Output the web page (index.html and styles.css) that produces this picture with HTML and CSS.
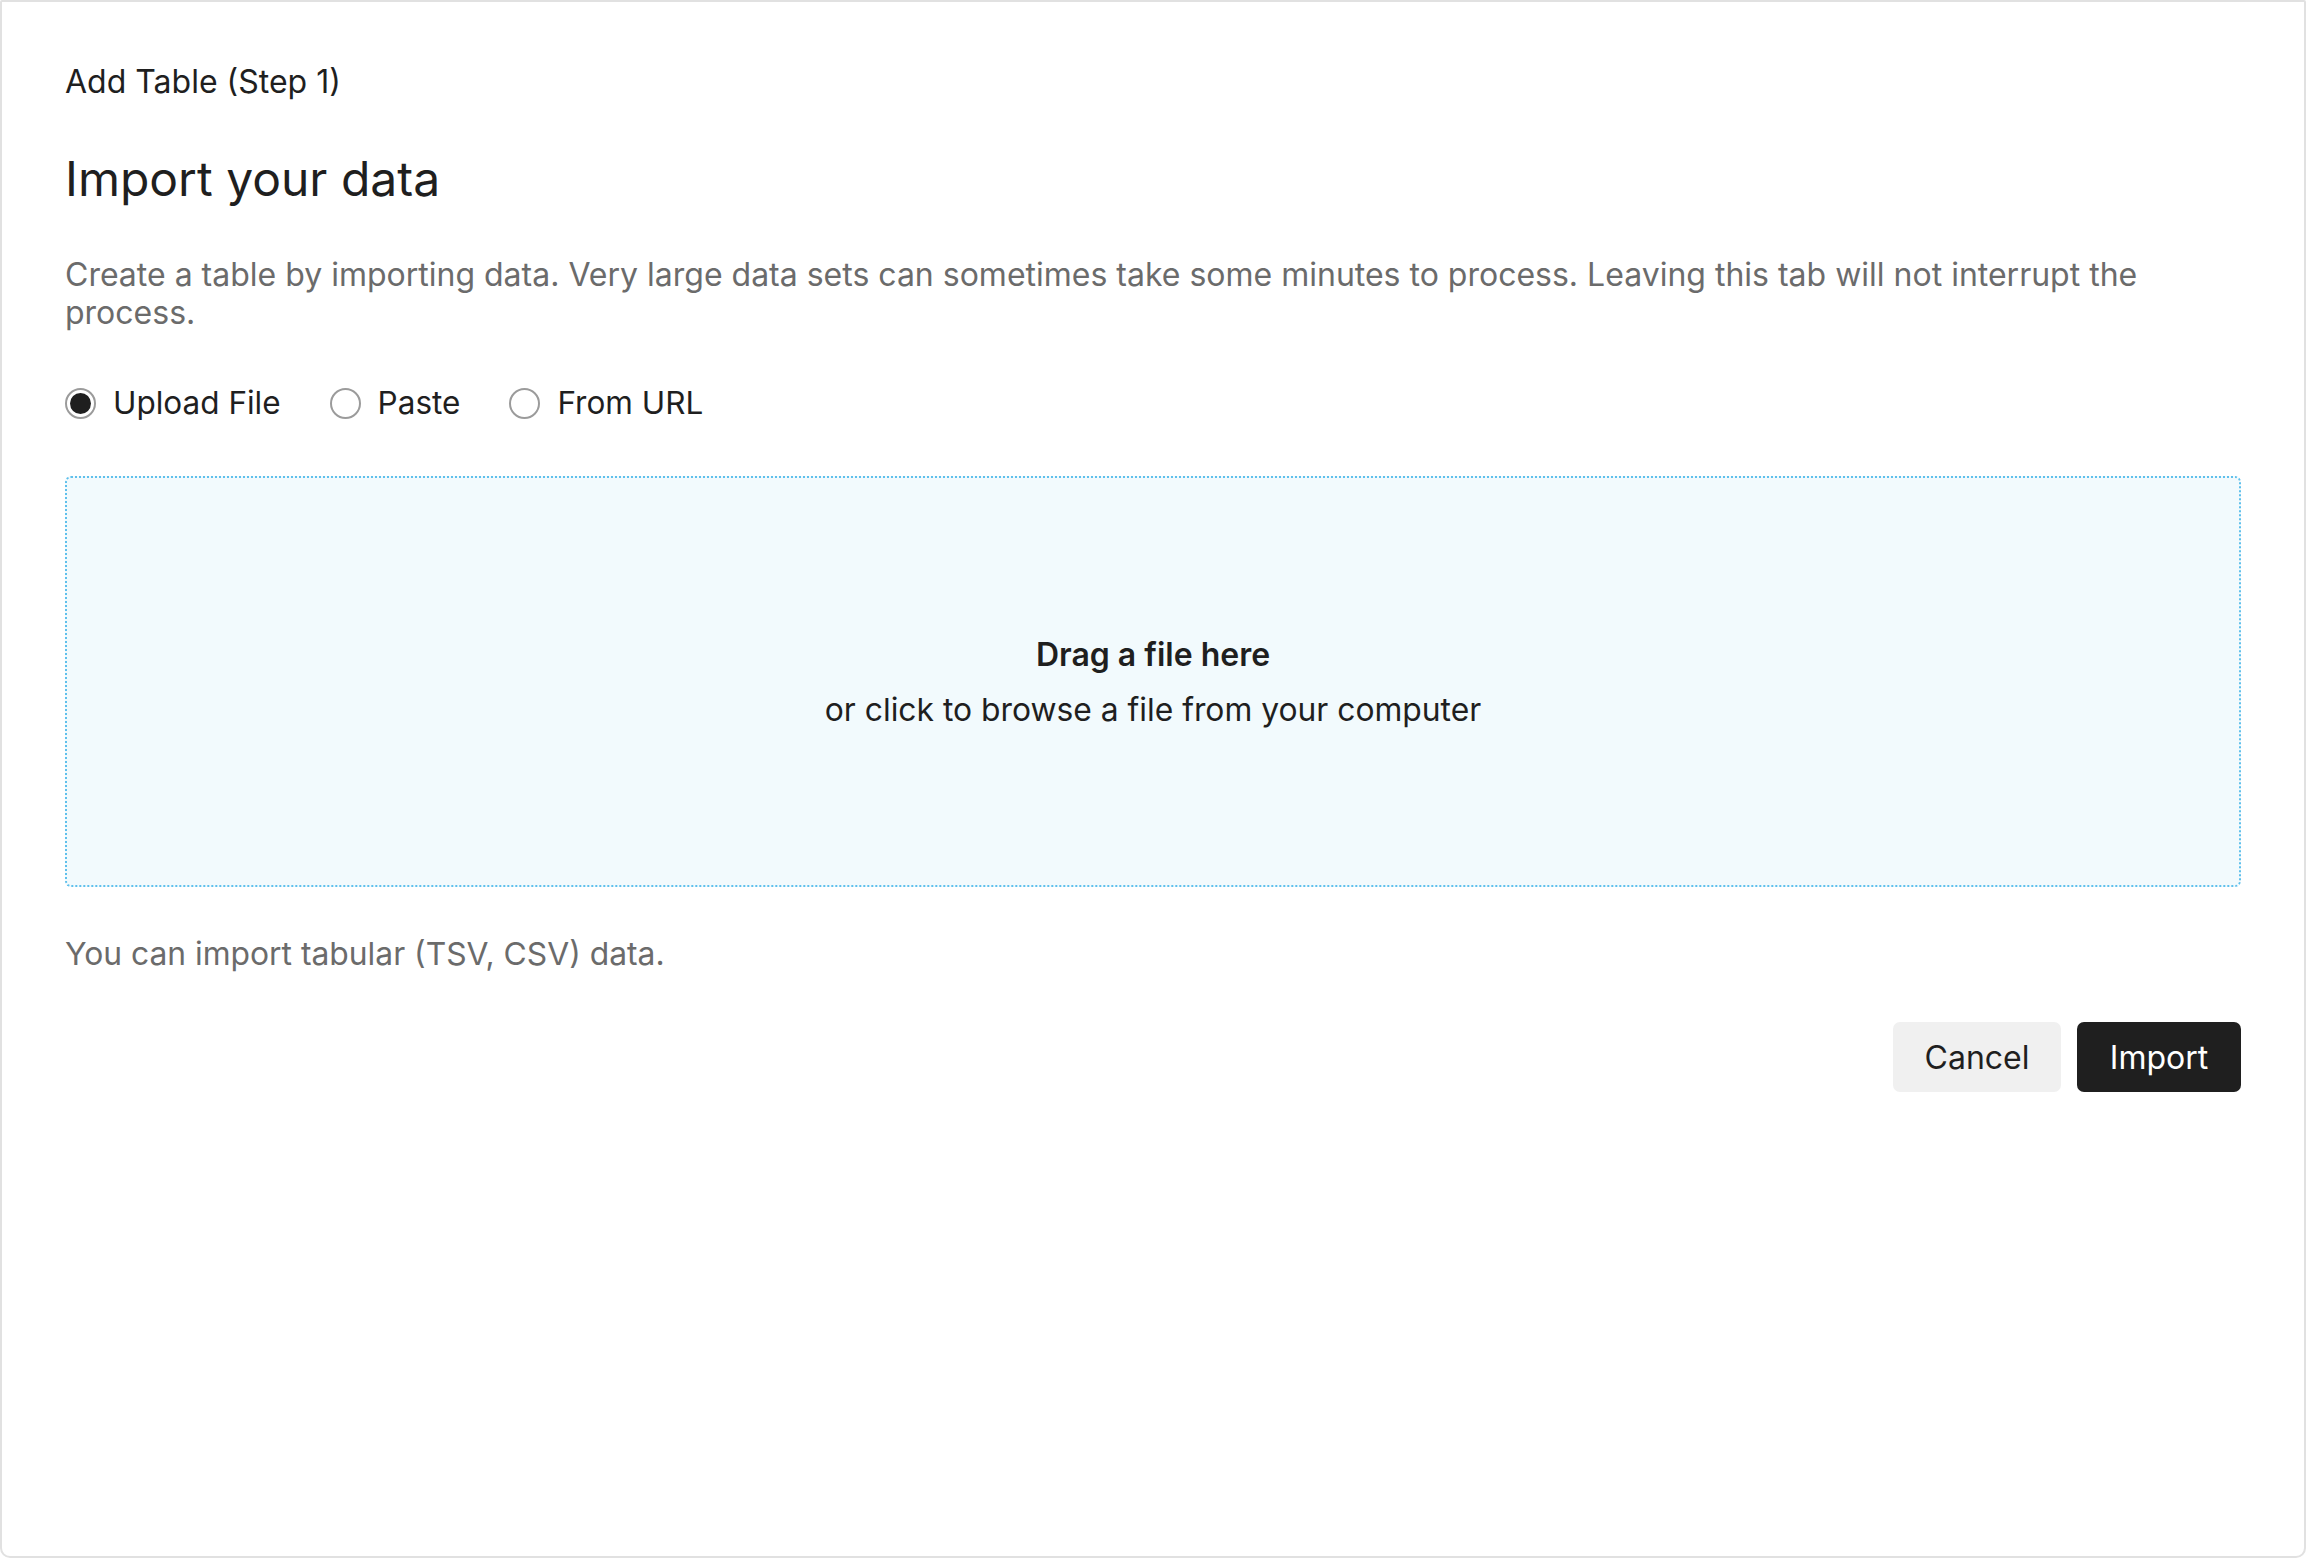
FILE: index.html
```html
<!DOCTYPE html>
<html lang="en">
<head>
<meta charset="utf-8">
<title>Add Table</title>
<link rel="stylesheet" href="styles.css">
</head>
<body>
<div class="frame">
  <div class="step">Add Table (Step 1)</div>
  <h1 class="title">Import your data</h1>
  <p class="desc">Create a table by importing data. Very large data sets can sometimes take some minutes to process. Leaving this tab will not interrupt the process.</p>
  <div class="radios">
    <label class="radio"><span class="dot checked"></span><span class="rlabel">Upload File</span></label>
    <label class="radio"><span class="dot"></span><span class="rlabel">Paste</span></label>
    <label class="radio"><span class="dot"></span><span class="rlabel">From URL</span></label>
  </div>
  <div class="drop">
    <div class="drop-main">Drag a file here</div>
    <div class="drop-sub">or click to browse a file from your computer</div>
  </div>
  <p class="note">You can import tabular (TSV, CSV) data.</p>
  <div class="actions">
    <button class="btn cancel">Cancel</button>
    <button class="btn primary">Import</button>
  </div>
</div>
</body>
</html>
```
FILE: styles.css
```css
html, body {
  margin: 0;
  padding: 0;
  background: #ffffff;
}
body {
  font-family: Inter, "Noto Sans", "Liberation Sans", sans-serif;
  color: #1f1f1f;
}
.frame {
  box-sizing: border-box;
  width: 2306px;
  height: 1558px;
  border: 2px solid #e1e1e1;
  border-radius: 2px 2px 10px 10px;
  padding: 60px 63px 0 63px;
}
.step {
  font-size: 32px;
  line-height: 40px;
  color: #1f1f1f;
}
.title {
  margin: 49px 0 0 0;
  font-size: 48px;
  line-height: 56px;
  font-weight: 400;
  color: #1f1f1f;
}
.desc {
  margin: 49px 0 0 0;
  font-size: 32px;
  line-height: 38px;
  color: #6b6b6b;
}
.radios {
  margin-top: 51px;
  display: flex;
  align-items: center;
  gap: 49px;
  height: 40px;
}
.radio {
  display: flex;
  align-items: center;
  gap: 17px;
}
.dot {
  box-sizing: border-box;
  width: 31px;
  height: 31px;
  border: 2px solid #9b9b9b;
  border-radius: 50%;
  display: flex;
  align-items: center;
  justify-content: center;
}
.dot.checked::after {
  content: "";
  width: 21px;
  height: 21px;
  border-radius: 50%;
  background: #1f1f1f;
}
.rlabel {
  font-size: 31.5px;
  line-height: 40px;
  color: #1f1f1f;
}
.drop {
  margin-top: 53px;
  box-sizing: border-box;
  height: 411px;
  border: 2px dotted #5fc0ec;
  border-radius: 6px;
  background: #f2fafd;
  display: flex;
  flex-direction: column;
  align-items: center;
  justify-content: center;
}
.drop-main {
  font-size: 32px;
  line-height: 55px;
  font-weight: 600;
  color: #1f1f1f;
}
.drop-sub {
  font-size: 31.8px;
  line-height: 55px;
  color: #1f1f1f;
}
.note {
  margin: 47px 0 0 0;
  font-size: 31.8px;
  line-height: 40px;
  color: #6b6b6b;
}
.actions {
  margin-top: 48px;
  display: flex;
  justify-content: flex-end;
  gap: 16px;
}
.btn {
  font-family: inherit;
  font-size: 32px;
  height: 70px;
  border: none;
  border-radius: 7px;
  padding: 0;
  cursor: pointer;
}
.cancel {
  width: 168px;
  background: #f0f0f0;
  color: #1f1f1f;
}
.primary {
  width: 164px;
  background: #1f1f1f;
  color: #ffffff;
}
```
